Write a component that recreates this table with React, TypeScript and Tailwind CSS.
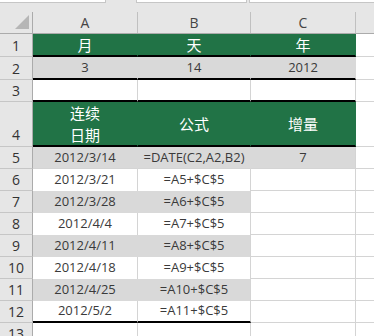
const LATIN = "font-['Open_Sans','Noto_Sans_CJK_SC',sans-serif]";

type Cell = { text?: string; bg: 'green' | 'gray' | 'white'; bottom: 'black' | 'grid' | 'none'; right: 'grid' | 'none' };

interface RowSpec {
  n: number;
  h: string;
  cells: Cell[];
  tall?: boolean;
}

const W = ['w-[105px]', 'w-[113px]', 'w-[105px]'];

const bgClass = { green: 'bg-[#217346] text-white', gray: 'bg-[#d9d9d9] text-[#3a3a3a]', white: 'bg-white text-[#3a3a3a]' };

function g(t: string[]): Cell[] {
  return t.map((text) => ({ text, bg: 'green', bottom: 'black', right: 'none' }));
}

function data(a: string, b: string, grayRow: boolean, last = false): Cell[] {
  const bg = grayRow ? 'gray' : 'white';
  return [
    { text: a, bg, bottom: last ? 'black' : 'none', right: grayRow ? 'none' : 'grid' },
    { text: b, bg, bottom: last ? 'black' : 'none', right: 'grid' },
    { text: '', bg: 'white', bottom: 'grid', right: 'grid' },
  ];
}

const rows: RowSpec[] = [
  { n: 1, h: 'h-[23px]', cells: g(['月', '天', '年']) },
  {
    n: 2,
    h: 'h-[23px]',
    cells: ['3', '14', '2012'].map((text) => ({ text, bg: 'gray', bottom: 'black', right: 'none' })),
  },
  {
    n: 3,
    h: 'h-[22px]',
    cells: ['', '', ''].map((text) => ({ text, bg: 'white', bottom: 'black', right: 'grid' })),
  },
  { n: 4, h: 'h-[45px]', tall: true, cells: g(['连续\n日期', '公式', '增量']) },
  {
    n: 5,
    h: 'h-[22px]',
    cells: [
      { text: '2012/3/14', bg: 'gray', bottom: 'grid', right: 'none' },
      { text: '=DATE(C2,A2,B2)', bg: 'gray', bottom: 'grid', right: 'none' },
      { text: '7', bg: 'gray', bottom: 'grid', right: 'grid' },
    ],
  },
  { n: 6, h: 'h-[22px]', cells: data('2012/3/21', '=A5+$C$5', false) },
  { n: 7, h: 'h-[22px]', cells: data('2012/3/28', '=A6+$C$5', true) },
  { n: 8, h: 'h-[22px]', cells: data('2012/4/4', '=A7+$C$5', false) },
  { n: 9, h: 'h-[22px]', cells: data('2012/4/11', '=A8+$C$5', true) },
  { n: 10, h: 'h-[22px]', cells: data('2012/4/18', '=A9+$C$5', false) },
  { n: 11, h: 'h-[22px]', cells: data('2012/4/25', '=A10+$C$5', true) },
  { n: 12, h: 'h-[22px]', cells: data('2012/5/2', '=A11+$C$5', false, true) },
  {
    n: 13,
    h: 'h-[22px]',
    cells: ['', '', ''].map((text) => ({ text, bg: 'white', bottom: 'grid', right: 'grid' })),
  },
];

function borderClasses(c: Cell) {
  const b =
    c.bottom === 'black'
      ? 'border-b-2 border-b-black'
      : c.bottom === 'grid'
        ? 'border-b border-b-[#d4d4d4]'
        : '';
  const r =
    c.right === 'grid'
      ? 'border-r border-r-[#d4d4d4]'
      : c.bg === 'green'
        ? 'border-r border-r-[#217346]'
        : c.bg === 'gray'
          ? 'border-r border-r-[#d9d9d9]'
          : 'border-r border-r-white';
  return `${b} ${r}`;
}

function Row({ spec }: { spec: RowSpec }) {
  return (
    <div className={`flex ${spec.h}`}>
      <div
        className={`w-[33px] shrink-0 flex justify-center border-r border-r-[#ababab] border-b border-b-[#c6c6c6] bg-[#e6e6e6] text-[14px] text-[#333] ${
          spec.tall ? 'items-end pb-[1px]' : 'items-center'
        }`}
      >
        {spec.n}
      </div>
      {spec.cells.map((c, i) => (
        <div
          key={i}
          className={`${W[i]} shrink-0 flex items-center justify-center whitespace-pre text-center ${bgClass[c.bg]} ${borderClasses(c)} ${
            c.bg === 'green' ? 'text-[15px] leading-[22px]' : 'text-[13px]'
          }`}
        >
          {c.text}
        </div>
      ))}
      <div className="flex-1 bg-white border-b border-b-[#d4d4d4]" />
    </div>
  );
}

export default function App() {
  return (
    <div className={`w-[374px] h-[336px] overflow-hidden bg-white ${LATIN}`}>
      <div className="h-[34px] bg-[#e6e6e6] border-b border-b-[#ababab] flex flex-col">
        <div className="flex h-[3px]">
          <div className="w-[106px] bg-white border-b border-r border-[#c6c6c6]" />
          <div className="w-[30px]" />
          <div className="w-[111px] bg-white border-b border-x border-[#c6c6c6]" />
          <div className="w-[2px]" />
          <div className="flex-1 bg-white border-b border-l border-[#c6c6c6]" />
        </div>
        <div className="h-[9px]" />
        <div className="flex flex-1 text-[14px] text-[#444]">
          <div className="w-[33px] border-r border-r-[#ababab] relative">
            <svg className="absolute left-[15px] top-[3px]" width="14" height="14" viewBox="0 0 14 14">
              <polygon points="14,0 14,14 0,14" fill="#b6b6b6" />
            </svg>
          </div>
          <div className="w-[105px] border-r border-r-[#c0c0c0] flex items-center justify-center">A</div>
          <div className="w-[113px] border-r border-r-[#c0c0c0] flex items-center justify-center">B</div>
          <div className="w-[105px] border-r border-r-[#c0c0c0] flex items-center justify-center">C</div>
          <div className="flex-1" />
        </div>
      </div>
      {rows.map((r) => (
        <Row key={r.n} spec={r} />
      ))}
    </div>
  );
}
